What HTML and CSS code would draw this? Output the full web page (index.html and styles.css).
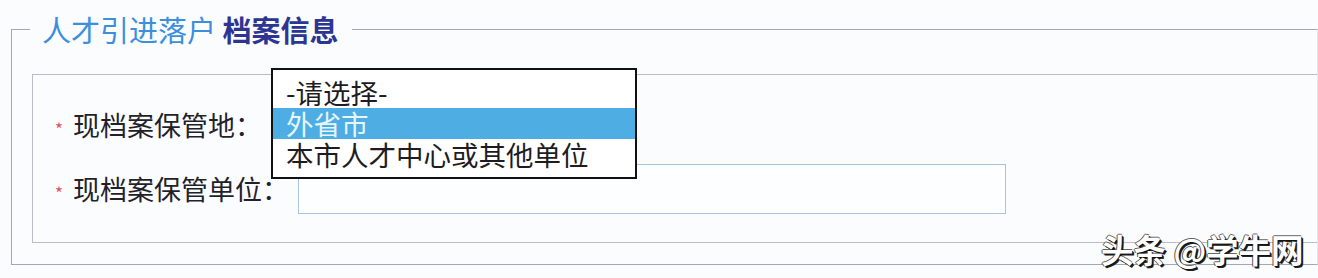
FILE: index.html
```html
<!DOCTYPE html>
<html lang="zh-CN">
<head>
<meta charset="utf-8">
<title>人才引进落户 档案信息</title>
<link rel="stylesheet" href="styles.css">
</head>
<body>
<fieldset class="section">
  <legend class="section-title"><span class="title-light">人才引进落户</span> <span class="title-dark">档案信息</span></legend>
  <div class="form-box">
    <div class="row">
      <span class="req">*</span>
      <label class="label">现档案保管地：</label>
      <div class="select">
        <ul class="listbox">
          <li class="option">-请选择-</li>
          <li class="option selected">外省市</li>
          <li class="option">本市人才中心或其他单位</li>
        </ul>
      </div>
    </div>
    <div class="row">
      <span class="req">*</span>
      <label class="label">现档案保管单位：</label>
      <div class="input"></div>
    </div>
  </div>
</fieldset>
<div class="watermark">头条 @学牛网</div>
</body>
</html>
```

FILE: styles.css
```css
html, body {
  margin: 0;
  padding: 0;
}
body {
  width: 1318px;
  height: 278px;
  overflow: hidden;
  background: #fbfcfe;
  font-family: "Noto Sans CJK SC", "Noto Sans", sans-serif;
  color: #29252f;
  position: relative;
}
.section {
  margin: 13px 0 0 11px;
  padding: 29px 0 21px 20px;
  border: 1px solid #a3a7af;
  border-right-color: #e4e7ec;
  min-width: 0;
}
.section-title {
  margin-left: -2px;
  padding: 0 13px 0 12px;
  font-size: 29px;
  line-height: 32px;
  white-space: nowrap;
}
.title-light {
  color: #3b8fdc;
}
.title-dark {
  color: #2c3592;
  font-weight: bold;
}
.form-box {
  border: 1px solid #b9bdc7;
  border-right: none;
  padding: 25px 0 28px 22px;
  display: flex;
  flex-direction: column;
  gap: 14px;
}
.row {
  display: flex;
  align-items: center;
  height: 50px;
}
.req {
  color: #e0506a;
  font-size: 17px;
  width: 8px;
  margin-right: 10px;
  line-height: 1;
  position: relative;
  top: 3px;
}
.label {
  font-size: 27px;
  line-height: 50px;
  margin-right: 9px;
  white-space: nowrap;
  color: #231f2b;
}
.select {
  position: relative;
  width: 366px;
  height: 50px;
}
.listbox {
  position: absolute;
  left: 0;
  top: -32px;
  width: 366px;
  box-sizing: border-box;
  margin: 0;
  padding: 7px 0 7px;
  list-style: none;
  background: #ffffff;
  border: 2px solid #111111;
  z-index: 2;
}
.option {
  font-size: 27.5px;
  line-height: 31px;
  height: 31px;
  padding-left: 13px;
  color: #1e1c22;
  white-space: nowrap;
}
.option.selected {
  background: #4eaee4;
  color: #e6f6ff;
}
.input {
  width: 708px;
  height: 50px;
  box-sizing: border-box;
  border: 1px solid #a9c3db;
  background: #fdfeff;
}
.watermark {
  position: absolute;
  left: 1101px;
  top: 229px;
  font-size: 32.5px;
  line-height: 40px;
  font-weight: bold;
  color: #ffffff;
  white-space: nowrap;
  text-shadow: 1px 1px 0 #111, 2px 2px 0 #222, -1px 0 0 #555, 0 -1px 0 #666;
}
```
